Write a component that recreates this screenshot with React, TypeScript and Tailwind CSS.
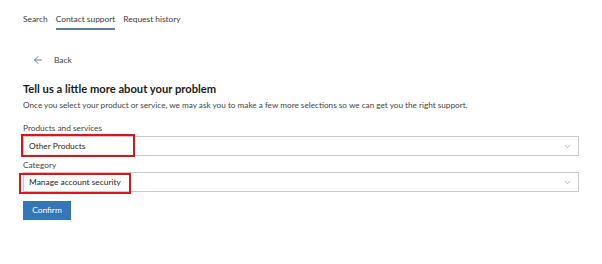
import { ArrowLeft, ChevronDown } from 'lucide-react';

const font = { fontFamily: '"Lato", "Noto Sans", sans-serif' };

function Select({ value, box }: { value: string; box: string }) {
  return (
    <div className="relative">
      <div className="flex items-center justify-between h-[20px] w-[556px] border border-[#c8c8c8] bg-white pl-[5px] pr-[6px] text-[8.4px] text-[#262626]">
        <span>{value}</span>
        <ChevronDown className="w-[9px] h-[9px] text-[#8a8a8a]" strokeWidth={1.5} />
      </div>
      <div className={`absolute border-2 border-[#e0121b] pointer-events-none ${box}`} />
    </div>
  );
}

export default function App() {
  const tabs = ['Search', 'Contact support', 'Request history'];

  return (
    <div className="w-[602px] h-[264px] bg-white text-[#262626]" style={font}>
      <div className="flex gap-[8px] pl-[23px] pt-[13px] text-[8.4px] text-[#3a3a3a]">
        {tabs.map((t, i) => (
          <div key={t} className="flex flex-col">
            <span className="leading-[13px]">{t}</span>
            <div className={`h-[2px] mt-[2px] ${i === 1 ? 'bg-[#5e7d96]' : 'bg-transparent'}`} />
          </div>
        ))}
      </div>

      <div className="flex items-center pl-[32px] mt-[23px] h-[14px] text-[8.4px] text-[#444]">
        <ArrowLeft className="w-[12px] h-[12px] text-[#2a5f8f]" strokeWidth={1.5} />
        <span className="ml-[10px]">Back</span>
      </div>

      <div className="pl-[23px]">
        <h1 className="mt-[14px] text-[11.2px] font-bold leading-[16px] text-[#1b1b1b]">
          Tell us a little more about your problem
        </h1>
        <p className="mt-[2px] text-[8.2px] leading-[12px] text-[#444]">
          Once you select your product or service, we may ask you to make a few more selections so we can get you the right support.
        </p>

        <div className="mt-[11px] text-[8.3px] leading-[12px] text-[#444]">Products and services</div>
        <div className="mt-[2px]">
          <Select value="Other Products" box="-left-[2px] -top-[2px] w-[114px] h-[23px]" />
        </div>

        <div className="mt-[3px] text-[8.3px] leading-[12px] text-[#444]">Category</div>
        <div className="mt-[1px]">
          <Select value="Manage account security" box="-left-[4px] top-[1px] w-[112px] h-[21px]" />
        </div>

        <button className="mt-[9px] w-[48px] h-[19px] bg-[#3476b7] text-white text-[8.4px]">
          Confirm
        </button>
      </div>
    </div>
  );
}
